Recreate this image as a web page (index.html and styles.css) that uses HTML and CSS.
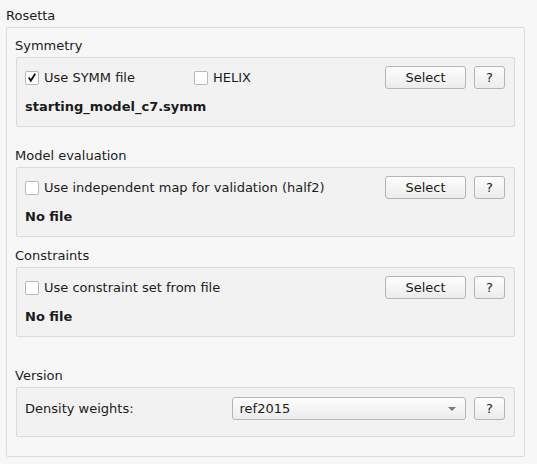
FILE: index.html
```html
<!DOCTYPE html>
<html>
<head>
<meta charset="utf-8">
<link rel="stylesheet" href="styles.css">
</head>
<body>
<div class="title">Rosetta</div>
<div class="frame">
  <div class="label l1">Symmetry</div>
  <div class="box">
    <div class="row">
      <label class="check"><span class="cb checked"><svg viewBox="0 0 13 13" width="13" height="13"><path d="M3 6.5 L5.2 10 L10 2.5" fill="none" stroke="#111" stroke-width="2"/></svg></span>Use SYMM file</label>
      <label class="check helix"><span class="cb"></span>HELIX</label>
      <span class="spacer"></span>
      <button class="btn sel">Select</button>
      <button class="btn q">?</button>
    </div>
    <div class="file">starting_model_c7.symm</div>
  </div>

  <div class="label l2">Model evaluation</div>
  <div class="box">
    <div class="row">
      <label class="check"><span class="cb"></span>Use independent map for validation (half2)</label>
      <span class="spacer"></span>
      <button class="btn sel">Select</button>
      <button class="btn q">?</button>
    </div>
    <div class="file">No file</div>
  </div>

  <div class="label l3">Constraints</div>
  <div class="box">
    <div class="row">
      <label class="check"><span class="cb"></span>Use constraint set from file</label>
      <span class="spacer"></span>
      <button class="btn sel">Select</button>
      <button class="btn q">?</button>
    </div>
    <div class="file">No file</div>
  </div>

  <div class="label l4">Version</div>
  <div class="box short">
    <div class="row">
      <span class="dw">Density weights:</span>
      <div class="combo"><span>ref2015</span><svg width="8" height="4" viewBox="0 0 8 4"><path d="M0 0 H8 L4 4 Z" fill="#7a7a7a"/></svg></div>
      <button class="btn q">?</button>
    </div>
  </div>
</div>
</body>
</html>
```

FILE: styles.css
```css
html, body {
  margin: 0;
  padding: 0;
  background: #f7f7f7;
}
body {
  font-family: "DejaVu Sans", sans-serif;
  font-size: 13px;
  color: #1b1b1b;
  width: 537px;
  height: 464px;
  overflow: hidden;
}
.title {
  height: 20px;
  padding: 7px 0 0 6px;
  line-height: 17px;
}
.frame {
  box-sizing: border-box;
  margin: 0 12px 0 6px;
  height: 430px;
  border: 1px solid #dcdcdc;
  border-radius: 2px;
  background: #f7f7f7;
  padding: 0 9px;
}
.label {
  line-height: 17px;
  height: 17px;
  margin-bottom: 3px;
  margin-left: -1px;
}
.l1 { margin-top: 9px; }
.l2 { margin-top: 20px; }
.l3 { margin-top: 10px; }
.l4 { margin-top: 30px; }
.box {
  box-sizing: border-box;
  height: 70px;
  border: 1px solid #dadada;
  border-radius: 2px;
  background: #f2f2f2;
  padding: 8px 9px 0 8px;
}
.box.short {
  height: 50px;
  padding-top: 9px;
}
.row {
  display: flex;
  align-items: center;
  height: 23px;
}
.check {
  display: flex;
  align-items: center;
  line-height: 17px;
}
.cb {
  box-sizing: border-box;
  width: 14px;
  height: 14px;
  border: 1px solid #b9b9b9;
  border-radius: 2px;
  background: #ffffff;
  margin-right: 5px;
  display: inline-flex;
  align-items: center;
  justify-content: center;
}
.cb svg { display: block; }
.helix { margin-left: 59px; }
.spacer { flex: 1; }
.btn {
  box-sizing: border-box;
  height: 23px;
  border: 1px solid #b5b5b5;
  border-radius: 3px;
  background: linear-gradient(#fdfdfd, #ececec);
  font-family: "DejaVu Sans", sans-serif;
  font-size: 13px;
  color: #1b1b1b;
  padding: 0;
  margin: 0;
}
.sel { width: 81px; }
.q { width: 31px; margin-left: 8px; }
.file {
  font-weight: bold;
  line-height: 17px;
  margin-top: 9px;
}
.dw {
  width: 207px;
  line-height: 17px;
}
.combo {
  box-sizing: border-box;
  width: 235px;
  height: 23px;
  border: 1px solid #b5b5b5;
  border-radius: 3px;
  background: linear-gradient(#fdfdfd, #ececec);
  display: flex;
  align-items: center;
  justify-content: space-between;
  padding: 0 9px 0 7px;
}
.combo svg { display: block; }
```
